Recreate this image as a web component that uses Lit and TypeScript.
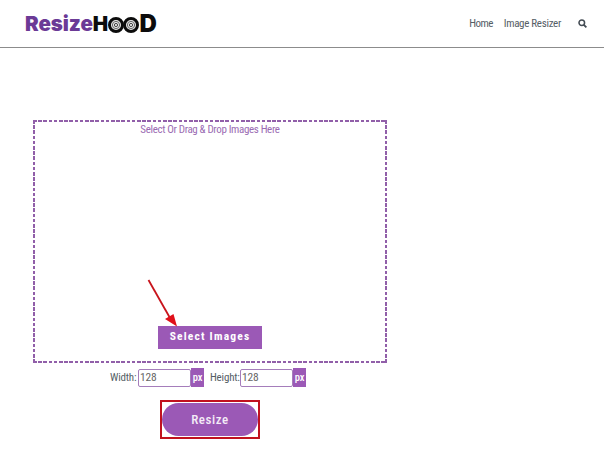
import { LitElement, html, css, svg } from "lit";
import { customElement } from "lit/decorators.js";

const ring = svg`<svg class="ring" viewBox="0 0 16 16" width="16" height="16" aria-hidden="true">
  <circle cx="8" cy="8" r="6.5" fill="#e8e8e8" stroke="#0c0c0c" stroke-width="3"/>
  <circle cx="8" cy="8" r="3.6" fill="none" stroke="#666" stroke-width="1"/>
  <circle cx="8" cy="8" r="1.6" fill="none" stroke="#444" stroke-width="1"/>
</svg>`;

@customElement("app-root")
export class AppRoot extends LitElement {
  static styles = css`
    :host { display: block; width: 604px; height: 449px; background: #fff; font-family: Roboto, "Liberation Sans", sans-serif; font-stretch: 75%; overflow: hidden; }
    header { height: 47px; box-sizing: content-box; border-bottom: 1.5px solid #8c8c8c; display: flex; align-items: center; justify-content: space-between; padding: 0 17px 0 25px; }
    .logo { display: flex; align-items: center; height: 20px; font-family: Inter, "Liberation Sans", sans-serif; font-stretch: 100%; font-weight: 900; font-size: 20.5px; letter-spacing: -0.05px; line-height: 20px; margin-top: 1px; }
    .logo .a { color: #6b3a96; }
    .logo .b { color: #0c0c0c; }
    .logo .d { font-size: 24px; margin-top: -1px; margin-left: 0.5px; }
    .ring { display: block; margin: 1px -0.25px 0; }
    nav { display: flex; align-items: center; font-size: 11px; letter-spacing: -0.3px; color: #555e66; }
    nav span:first-child { margin-right: 11px; letter-spacing: -0.6px; }
    nav svg { margin-left: 17px; display: block; }
    main { position: relative; padding: 72px 0 0 33px; }
    .drop { box-sizing: border-box; width: 354px; height: 243px; background:
        repeating-linear-gradient(90deg, #915fa9 0 3.6px, transparent 3.6px 5.2px) top left / 100% 2px no-repeat,
        repeating-linear-gradient(90deg, #915fa9 0 3.6px, transparent 3.6px 5.2px) bottom left / 100% 2px no-repeat,
        repeating-linear-gradient(180deg, #915fa9 0 3.6px, transparent 3.6px 5.2px) top left / 2px 100% no-repeat,
        repeating-linear-gradient(180deg, #915fa9 0 3.6px, transparent 3.6px 5.2px) top right / 2px 100% no-repeat;
      padding: 3px 0 14px; display: flex; flex-direction: column; align-items: center; justify-content: space-between; color: #9b6cb3; font-size: 11px; letter-spacing: -0.35px; line-height: 14px; }
    .drop p { margin: 0; }
    .sel { box-sizing: border-box; width: 104px; height: 23px; padding-bottom: 3px; background: #9b59b6; color: #fff; font-weight: 700; font-size: 11.5px; letter-spacing: 1.2px; display: flex; align-items: center; justify-content: center; }
    .dims { box-sizing: border-box; width: 354px; margin-top: 4px; height: 20px; display: flex; align-items: center; padding-left: 77px; font-size: 11px; letter-spacing: -0.2px; color: #555e66; }
    .dims label { width: 28px; }
    .dims label.second { width: 30px; margin-left: 6px; }
    .field { box-sizing: border-box; width: 53px; height: 18px; margin-top: 1px; border: 1.5px solid #a57dbb; border-radius: 2px; font-size: 11.5px; line-height: 15px; padding-left: 1px; color: #666; }
    .px { width: 13px; height: 19px; background: #9b59b6; color: #fff; font-size: 10.5px; font-weight: 500; display: flex; align-items: center; justify-content: center; }
    .action { width: 354px; margin-top: 13px; display: flex; justify-content: center; }
    .outline { box-sizing: border-box; width: 100px; height: 39px; border: 2px solid #c1121f; display: flex; align-items: center; justify-content: center; }
    .resize { width: 96px; height: 33px; border-radius: 17px; background: #9b59b6; color: #f4ecf7; font-size: 13px; font-weight: 500; letter-spacing: 0.6px; display: flex; align-items: center; justify-content: center; }
    .arrow { position: absolute; left: 145px; top: 230px; }
  `;

  render() {
    return html`
      <header>
        <div class="logo"><span class="a">Resize</span><span class="b">H</span>${ring}${ring}<span class="b d">D</span></div>
        <nav>
          <span>Home</span><span>Image Resizer</span>
          <svg width="9" height="9" viewBox="0 0 10 10" aria-hidden="true"><circle cx="4.2" cy="4.2" r="3.1" fill="none" stroke="#444c54" stroke-width="1.7"/><path d="M6.5 6.5 9.3 9.3" stroke="#444c54" stroke-width="2"/></svg>
        </nav>
      </header>
      <main>
        <div class="drop">
          <p>Select Or Drag &amp; Drop Images Here</p>
          <div class="sel">Select Images</div>
        </div>
        <div class="dims">
          <label>Width:</label><div class="field">128</div><div class="px">px</div>
          <label class="second">Height:</label><div class="field">128</div><div class="px">px</div>
        </div>
        <div class="action"><div class="outline"><div class="resize">Resize</div></div></div>
        <svg class="arrow" width="36" height="52" viewBox="0 0 36 52" aria-hidden="true">
          <path d="M3.5 2 L25 40" stroke="#c8141c" stroke-width="1.8" fill="none"/>
          <path d="M32 48.5 L20 41 L28.5 36 Z" fill="#e0101a"/>
        </svg>
      </main>
    `;
  }
}
